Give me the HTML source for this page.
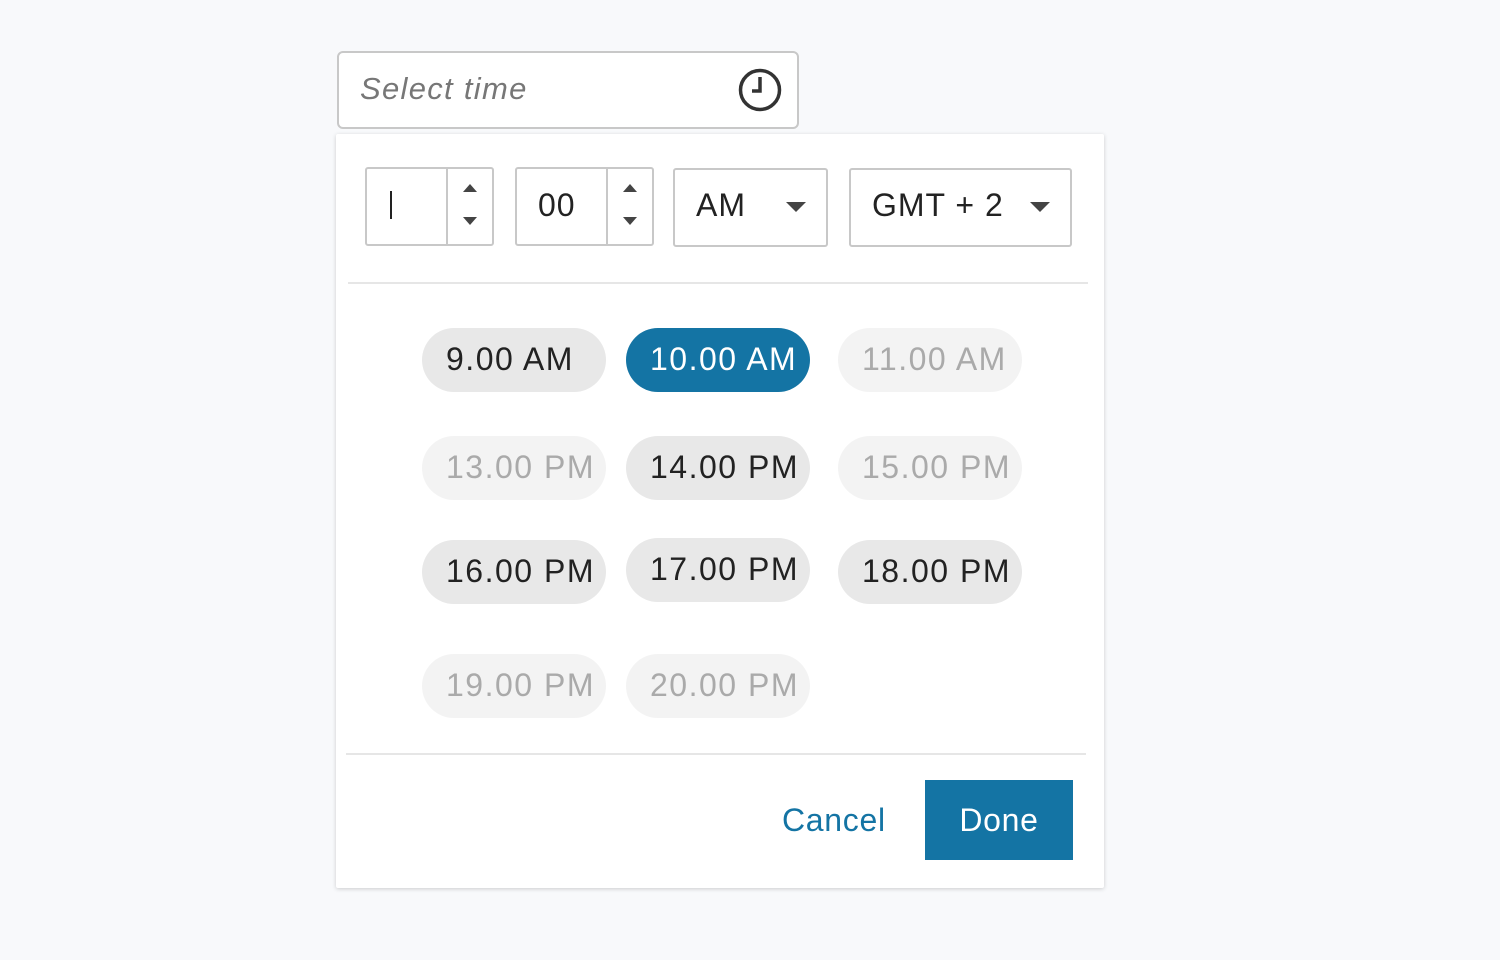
<!DOCTYPE html>
<html><head><meta charset="utf-8"><style>
*{box-sizing:border-box;margin:0;padding:0}
body{width:1500px;height:960px;background:#f8f9fb;font-family:"Liberation Sans",sans-serif;position:relative;overflow:hidden;color:#222}
.a{position:absolute}
.inp{left:337px;top:51px;width:462px;height:78px;border:2px solid #c8c8c8;border-radius:6px;background:#fff}
.ph{left:360px;top:71px;font-size:31px;font-style:italic;color:#777;letter-spacing:1.3px}
.panel{left:336px;top:134px;width:768px;height:754px;background:#fff;box-shadow:0 1px 4px rgba(0,0,0,.18);border-radius:2px}
.box{border:2px solid #c8c8c8;border-radius:3px;background:#fff}
.up{width:0;height:0;border-left:7px solid transparent;border-right:7px solid transparent;border-bottom:8px solid #444}
.dn{width:0;height:0;border-left:7px solid transparent;border-right:7px solid transparent;border-top:8px solid #444}
.dd{width:0;height:0;border-left:10px solid transparent;border-right:10px solid transparent;border-top:10px solid #444}
.t{font-size:32px;line-height:1;letter-spacing:1px}
.pill{width:184px;height:64px;border-radius:32px;background:#e8e8e8;color:#222;font-size:32px;line-height:62px;padding-left:24px;white-space:nowrap;letter-spacing:1.5px}
.dis{background:#f3f3f3;color:#aaa}
.sel{background:#1474a4;color:#fff}
.hr{height:2px;background:#e6e6e6}
</style></head><body>
<div class="a inp"></div>
<div class="a ph">Select time</div>
<svg class="a" style="left:737px;top:67px" width="46" height="46" viewBox="0 0 46 46"><circle cx="23" cy="23" r="19.5" fill="none" stroke="#333" stroke-width="3.5"/><path d="M23 10V24H15" fill="none" stroke="#333" stroke-width="3.5"/></svg>
<div class="a panel"></div>

<div class="a box" style="left:365px;top:167px;width:129px;height:79px"></div>
<div class="a" style="left:446px;top:168px;width:2px;height:77px;background:#c8c8c8"></div>
<div class="a" style="left:390px;top:191px;width:2px;height:28px;background:#222"></div>
<div class="a up" style="left:463px;top:184px"></div>
<div class="a dn" style="left:463px;top:217px"></div>

<div class="a box" style="left:515px;top:167px;width:139px;height:79px"></div>
<div class="a" style="left:606px;top:168px;width:2px;height:77px;background:#c8c8c8"></div>
<div class="a t" style="left:538px;top:189px">00</div>
<div class="a up" style="left:623px;top:184px"></div>
<div class="a dn" style="left:623px;top:217px"></div>

<div class="a box" style="left:673px;top:168px;width:155px;height:79px"></div>
<div class="a t" style="left:696px;top:189px">AM</div>
<div class="a dd" style="left:786px;top:202px"></div>

<div class="a box" style="left:849px;top:168px;width:223px;height:79px"></div>
<div class="a t" style="left:872px;top:189px">GMT + 2</div>
<div class="a dd" style="left:1030px;top:202px"></div>

<div class="a hr" style="left:348px;top:282px;width:740px"></div>

<div class="a pill" style="left:422px;top:328px">9.00 AM</div>
<div class="a pill sel" style="left:626px;top:328px">10.00 AM</div>
<div class="a pill dis" style="left:838px;top:328px">11.00 AM</div>
<div class="a pill dis" style="left:422px;top:436px">13.00 PM</div>
<div class="a pill" style="left:626px;top:436px">14.00 PM</div>
<div class="a pill dis" style="left:838px;top:436px">15.00 PM</div>
<div class="a pill" style="left:422px;top:540px">16.00 PM</div>
<div class="a pill" style="left:626px;top:538px">17.00 PM</div>
<div class="a pill" style="left:838px;top:540px">18.00 PM</div>
<div class="a pill dis" style="left:422px;top:654px">19.00 PM</div>
<div class="a pill dis" style="left:626px;top:654px">20.00 PM</div>

<div class="a hr" style="left:346px;top:753px;width:740px"></div>

<div class="a" style="left:782px;top:804px;font-size:32px;line-height:1;color:#1474a4;letter-spacing:0.7px">Cancel</div>
<div class="a" style="left:925px;top:780px;width:148px;height:80px;background:#1474a4;color:#fff;font-size:32px;line-height:80px;text-align:center;letter-spacing:0.7px">Done</div>
</body></html>
